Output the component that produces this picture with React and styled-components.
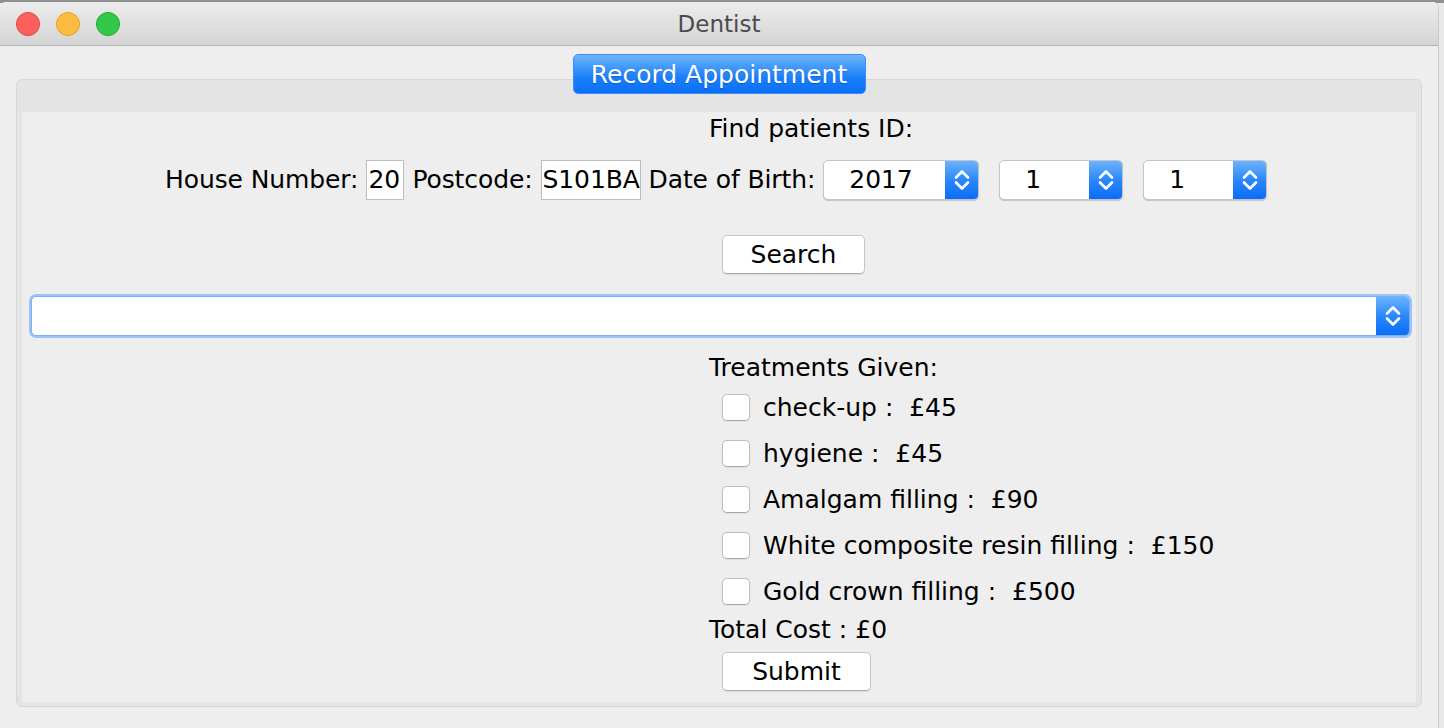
import styled, { createGlobalStyle } from "styled-components";

const GlobalStyle = createGlobalStyle`
  html, body {
    margin: 0;
    padding: 0;
  }
  body {
    background: #e9e9e9;
    font-family: "DejaVu Sans", "Liberation Sans", sans-serif;
    overflow: hidden;
  }
`;

const Desktop = styled.div`
  width: 1444px;
  height: 728px;
  padding-top: 2px;
  box-sizing: border-box;
  background: linear-gradient(#8f8f8f 0, #8f8f8f 3px, #e9e9e9 3px);
`;

const Window = styled.div`
  width: 1439px;
  height: 726px;
  box-sizing: border-box;
  display: flex;
  flex-direction: column;
  background: #eeeeee;
  border-radius: 6px 6px 0 0;
  border-right: 1px solid #c9c9c9;
  overflow: hidden;
`;

const TitleBar = styled.div`
  height: 43px;
  flex-shrink: 0;
  display: grid;
  grid-template-columns: 1fr auto 1fr;
  align-items: center;
  background: linear-gradient(#ececec, #d4d4d4);
  border-bottom: 1px solid #b2b2b2;
`;

const Lights = styled.div`
  display: flex;
  gap: 16px;
  padding-left: 16px;
  padding-top: 1px;
`;

const Light = styled.span`
  width: 24px;
  height: 24px;
  box-sizing: border-box;
  border-radius: 50%;
  background: ${({ $color }) => $color};
  border: 1px solid ${({ $edge }) => $edge};
`;

const Title = styled.div`
  font-size: 23px;
  color: #4b4b4b;
  padding-top: 1px;
`;

const Body = styled.div`
  flex: 1;
  display: flex;
  flex-direction: column;
  padding: 0 16px 21px 16px;
`;

const TabRow = styled.div`
  display: flex;
  justify-content: center;
  margin-top: 8px;
  margin-bottom: -15px;
  position: relative;
  z-index: 1;
`;

const Tab = styled.div`
  width: 293px;
  height: 40px;
  box-sizing: border-box;
  display: flex;
  align-items: center;
  justify-content: center;
  border-radius: 5px;
  border: 1px solid #3c8df5;
  background: linear-gradient(#6fb5fc, #1a7ff9 60%, #0b6ff8);
  color: #ffffff;
  font-size: 25px;
  text-shadow: 0 1px 1px rgba(0, 40, 120, 0.35);
`;

const Pane = styled.div`
  flex: 1;
  display: flex;
  border: 1px solid #d7d7d7;
  border-radius: 6px;
  background: #e4e4e4;
  padding: 32px 5px 4px 5px;
`;

const Content = styled.div`
  flex: 1;
  display: flex;
  flex-direction: column;
  background: #eeeeee;
  color: #000000;
  font-size: 25px;
`;

const Label = styled.div`
  line-height: 30px;
  margin-left: 687px;
  margin-top: ${({ $top }) => $top || 0}px;
  white-space: pre;
`;

const SearchRow = styled.div`
  display: flex;
  align-items: center;
  gap: 8px;
  height: 43px;
  margin-top: 14px;
  padding-left: 143px;
  white-space: pre;
  letter-spacing: -0.1px;
`;

const Field = styled.div`
  width: ${({ $w }) => $w}px;
  height: 40px;
  box-sizing: border-box;
  display: flex;
  align-items: center;
  padding-left: 1px;
  background: #ffffff;
  border: 1px solid #bdbdbd;
  overflow: hidden;
`;

const ComboBox = styled.div`
  width: ${({ $w }) => $w}px;
  height: 40px;
  box-sizing: border-box;
  display: flex;
  margin-left: ${({ $shift }) => $shift || 0}px;
  background: #ffffff;
  border-radius: 5px;
  border: 1px solid ${({ $focus }) => ($focus ? "#7eaff0" : "#c4c4c4")};
  box-shadow: ${({ $focus }) =>
    $focus ? "0 0 0 2px #9cc3f5" : "0 1px 1px rgba(0,0,0,0.18)"};
  overflow: hidden;
`;

const ComboValue = styled.div`
  flex: 1;
  display: flex;
  align-items: center;
  padding-left: 25px;
`;

const ComboArrow = styled.div`
  width: 33px;
  display: flex;
  align-items: center;
  justify-content: center;
  background: linear-gradient(#6cb3fc, #2a88fa 50%, #0a6cf8);
`;

const PatientRow = styled.div`
  display: flex;
  margin-top: 22px;
  padding-left: 9px;
`;

const PushButton = styled.div`
  width: ${({ $w }) => $w}px;
  height: 39px;
  box-sizing: border-box;
  display: flex;
  align-items: center;
  justify-content: center;
  margin-left: 700px;
  margin-top: ${({ $top }) => $top}px;
  background: #ffffff;
  border: 1px solid #c6c6c6;
  border-bottom-color: #a9a9a9;
  border-radius: 5px;
  box-shadow: 0 1px 1px rgba(0, 0, 0, 0.08);
`;

const CheckList = styled.div`
  display: flex;
  flex-direction: column;
  margin-top: 1px;
`;

const CheckRow = styled.label`
  height: 46px;
  display: flex;
  align-items: center;
  gap: 13px;
  margin-left: 700px;
  white-space: pre;
`;

const CheckBox = styled.span`
  width: 28px;
  height: 27px;
  box-sizing: border-box;
  background: #ffffff;
  border: 1px solid #bdbdbd;
  border-bottom-color: #a8a8a8;
  border-radius: 5px;
  box-shadow: 0 1px 1px rgba(0, 0, 0, 0.06);
`;

const Chevrons = () => (
  <svg width="16" height="24" viewBox="0 0 16 24" fill="none">
    <path
      d="M2 9.5 L8 3.5 L14 9.5 M2 14.5 L8 20.5 L14 14.5"
      stroke="#ffffff"
      strokeWidth="2.6"
      strokeLinecap="round"
      strokeLinejoin="round"
    />
  </svg>
);

const Combo = ({ w, value, shift, focus }) => (
  <ComboBox $w={w} $shift={shift} $focus={focus}>
    <ComboValue>{value}</ComboValue>
    <ComboArrow>
      <Chevrons />
    </ComboArrow>
  </ComboBox>
);

const treatments = [
  "check-up :  £45",
  "hygiene :  £45",
  "Amalgam filling :  £90",
  "White composite resin filling :  £150",
  "Gold crown filling :  £500",
];

const App = () => (
  <Desktop>
    <GlobalStyle />
    <Window>
      <TitleBar>
        <Lights>
          <Light $color="#fc605c" $edge="#e0443e" />
          <Light $color="#fdbc40" $edge="#dea123" />
          <Light $color="#34c84a" $edge="#1aab29" />
        </Lights>
        <Title>Dentist</Title>
        <div />
      </TitleBar>
      <Body>
        <TabRow>
          <Tab>Record Appointment</Tab>
        </TabRow>
        <Pane>
          <Content>
            <Label $top={2}>Find patients ID:</Label>
            <SearchRow>
              <span>House Number:</span>
              <Field $w={38}>20</Field>
              <span>Postcode:</span>
              <Field $w={100}>S101BA</Field>
              <span>Date of Birth:</span>
              <Combo w={156} value="2017" />
              <Combo w={124} value="1" shift={12} />
              <Combo w={124} value="1" shift={12} />
            </SearchRow>
            <PushButton $w={143} $top={34}>Search</PushButton>
            <PatientRow>
              <Combo w={1379} value="" focus />
            </PatientRow>
            <Label $top={17}>Treatments Given:</Label>
            <CheckList>
              {treatments.map((t) => (
                <CheckRow key={t}>
                  <CheckBox />
                  <span>{t}</span>
                </CheckRow>
              ))}
            </CheckList>
            <Label $top={1}>Total Cost : £0</Label>
            <PushButton $w={149} $top={7}>Submit</PushButton>
          </Content>
        </Pane>
      </Body>
    </Window>
  </Desktop>
);

export default App;
